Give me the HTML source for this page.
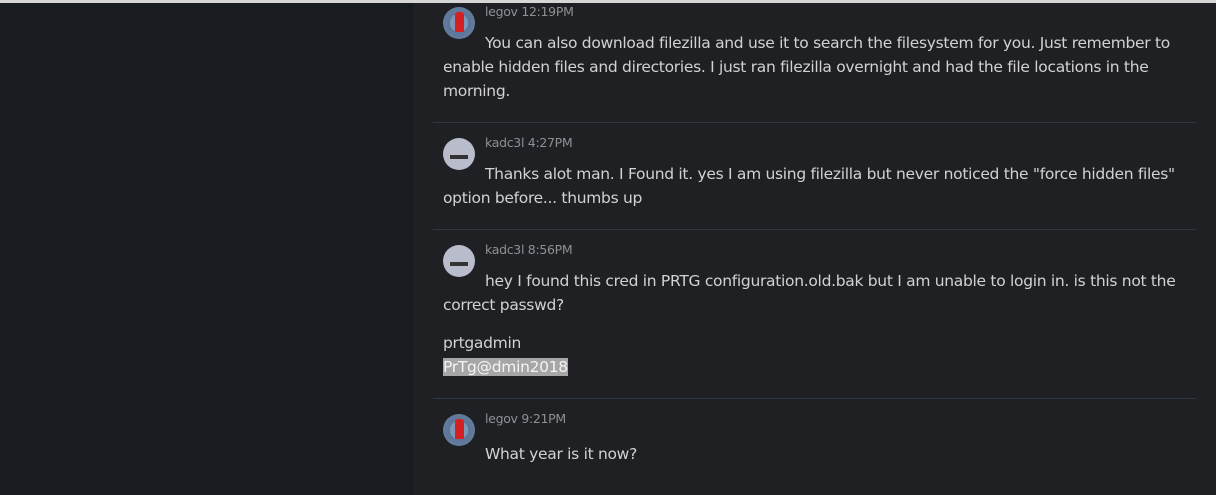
<!DOCTYPE html>
<html><head><style>
body{margin:0;width:1216px;height:495px;overflow:hidden;background:#1e2024;font-family:"DejaVu Sans","Liberation Sans",sans-serif;position:relative}
.top{position:absolute;left:0;top:0;width:1216px;height:3px;background:#d6d6d6}
.left{position:absolute;left:0;top:3px;width:413px;height:492px;background:#181b1f}
.msg{position:absolute;left:443px;width:745px;color:#d2d2d2;font-size:15.5px;line-height:24px;letter-spacing:-0.3px}
.hd{position:absolute;left:485px;font-size:12.5px;color:#8e9094;letter-spacing:-0.3px}
.av{position:absolute;left:443px;width:32px;height:32px;border-radius:50%}
.lg{background:radial-gradient(circle,#7d97b8 0 40%,#5d7597 41%,#6a84a6 100%)}
.lg::after{content:"";position:absolute;left:12px;top:5px;width:9px;height:20px;background:#d42020;border-radius:3px 3px 1px 1px}
.kd{background:#b8bccb}
.kd::after{content:"";position:absolute;left:7px;top:17px;width:18px;height:4px;background:#333}
.sep{position:absolute;left:433px;width:763px;height:1px;background:#2b3743}
.sel{background:#a6a6a6;color:#f4f4f4}
</style></head><body>
<div class="top"></div><div class="left"></div>
<div class="av lg" style="top:7px"></div>
<div class="hd" style="top:4px">legov 12:19PM</div>
<div class="msg" style="top:31px;text-indent:42px">You can also download filezilla and use it to search the filesystem for you. Just remember to enable hidden files and directories. I just ran filezilla overnight and had the file locations in the morning.</div>
<div class="sep" style="top:122px"></div>
<div class="av kd" style="top:138px"></div>
<div class="hd" style="top:135px">kadc3l 4:27PM</div>
<div class="msg" style="top:162px;text-indent:42px">Thanks alot man. I Found it. yes I am using filezilla but never noticed the "force hidden files" option before... thumbs up</div>
<div class="sep" style="top:229px"></div>
<div class="av kd" style="top:245px"></div>
<div class="hd" style="top:242px">kadc3l 8:56PM</div>
<div class="msg" style="top:269px;text-indent:42px">hey I found this cred in PRTG configuration.old.bak but I am unable to login in. is this not the correct passwd?</div>
<div class="msg" style="top:331px">prtgadmin<br><span class="sel">PrTg@dmin2018</span></div>
<div class="sep" style="top:398px"></div>
<div class="av lg" style="top:414px"></div>
<div class="hd" style="top:411px">legov 9:21PM</div>
<div class="msg" style="top:442px;left:485px">What year is it now?</div>
</body></html>
